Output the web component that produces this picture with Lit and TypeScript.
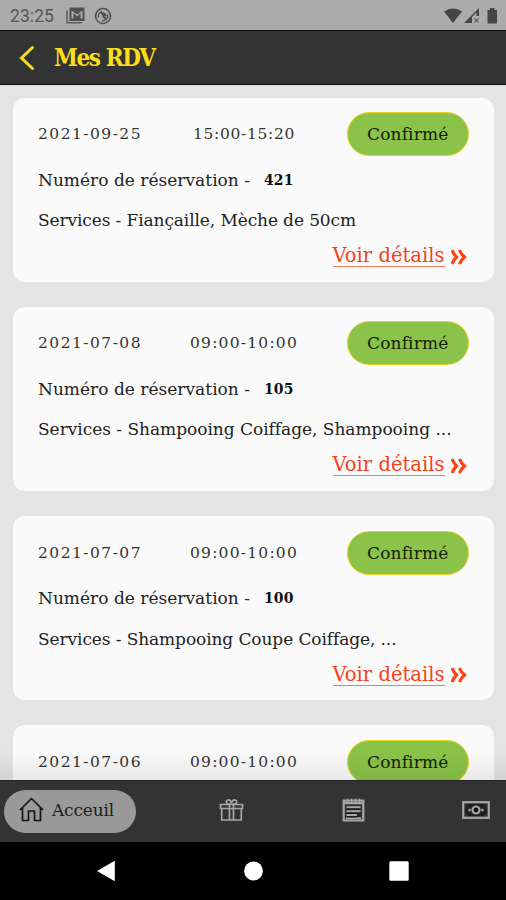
import { LitElement, html, css, nothing } from "lit";
import { customElement, property } from "lit/decorators.js";

const serif = css`"DejaVu Serif", serif`;
const condensed = css`"DejaVu Serif Condensed", "DejaVu Serif", serif`;

interface Booking {
  date: string;
  time: string;
  timeWidth: number;
  id?: string;
  services?: string;
  servicesWidth?: number;
}

const bookings: Booking[] = [
  { date: "2021-09-25", time: "15:00-15:20", timeWidth: 102, id: "421", services: "Services - Fiançaille, Mèche de 50cm", servicesWidth: 318 },
  { date: "2021-07-08", time: "09:00-10:00", timeWidth: 108, id: "105", services: "Services - Shampooing Coiffage, Shampooing ...", servicesWidth: 413 },
  { date: "2021-07-07", time: "09:00-10:00", timeWidth: 108, id: "100", services: "Services - Shampooing Coupe Coiffage, ...", servicesWidth: 358 },
  { date: "2021-07-06", time: "09:00-10:00", timeWidth: 108 },
];

/* One line of text whose tracking is adjusted to fill a given width. */
@customElement("fit-text")
export class FitText extends LitElement {
  @property() text = "";
  @property({ type: Number }) width = 100;

  static styles = css`
    :host { display: inline-block; white-space: pre; }
    span { display: inline-block; }
  `;

  updated() {
    const span = this.renderRoot.querySelector("span") as HTMLElement;
    span.style.letterSpacing = "0";
    const natural = span.getBoundingClientRect().width;
    const gap = (this.width - natural) / this.text.length;
    span.style.letterSpacing = `${gap.toFixed(3)}px`;
  }

  render() {
    return html`<span>${this.text}</span>`;
  }
}

@customElement("booking-card")
export class BookingCard extends LitElement {
  @property({ attribute: false }) booking!: Booking;

  static styles = css`
    :host {
      display: block;
      box-sizing: border-box;
      flex: none;
      height: 184.25px;
      padding: 14.5px 25px 0;
      border-radius: 12px;
      background: #fafafa;
      color: #222;
      font: 17px/24px ${serif};
    }
    .top { display: grid; grid-template-columns: 144px 124px 1fr; align-items: center; height: 44px; }
    .digits { display: block; font-size: 15.5px; color: #333; }
    .time { display: flex; justify-content: center; }
    .pill {
      justify-self: end;
      box-sizing: border-box;
      width: 122.5px;
      height: 44px;
      border: 1.5px solid #e6d21e;
      border-radius: 22px;
      background: #8bc34a;
      color: #14200a;
      display: flex;
      align-items: center;
      justify-content: center;
    }
    .number { display: flex; align-items: center; gap: 14px; height: 47px; }
    .number b { font-family: ${condensed}; font-size: 15.5px; color: #111; }
    .services { height: 34px; display: flex; align-items: center; }
    .details {
      display: flex;
      justify-content: flex-end;
      align-items: center;
      gap: 6px;
      height: 39px;
      padding-right: 2.5px;
      color: #f4431c;
      font-size: 19.5px;
    }
    .link { border-bottom: 1px solid #f77a60; line-height: 20px; }
    svg { display: block; }
  `;

  render() {
    const b = this.booking;
    return html`
      <div class="top">
        <fit-text class="digits" .text=${b.date} .width=${104}></fit-text>
        <div class="time"><fit-text class="digits" .text=${b.time} .width=${b.timeWidth}></fit-text></div>
        <div class="pill"><fit-text .text=${"Confirmé"} .width=${81}></fit-text></div>
      </div>
      ${b.services ? this.body(b) : nothing}
    `;
  }

  private body(b: Booking) {
    return html`
      <div class="number">
        <fit-text .text=${"Numéro de réservation -"} .width=${212}></fit-text>
        <b><fit-text .text=${b.id} .width=${29.5}></fit-text></b>
      </div>
      <div class="services"><fit-text .text=${b.services} .width=${b.servicesWidth}></fit-text></div>
      <div class="details">
        <fit-text class="link" .text=${"Voir détails"} .width=${112}></fit-text>
        <svg width="16" height="16" viewBox="0 0 16 16" fill="none" stroke="#fa4516" stroke-width="3.200">
          <path d="M1 1Q2.500 5 5.500 8Q2.500 11 1 15M8.500 1Q10 5 13.500 8Q10 11 8.500 15" />
        </svg>
      </div>
    `;
  }
}

@customElement("app-root")
export class AppRoot extends LitElement {
  static styles = css`
    :host {
      display: flex;
      flex-direction: column;
      width: 506px;
      height: 900px;
      overflow: hidden;
      background: #e4e4e4;
      font-family: ${serif};
    }
    svg { display: block; flex: none; }
    .status {
      box-sizing: border-box;
      flex: none;
      height: 30px;
      display: flex;
      align-items: center;
      padding: 1px 8px 0 10px;
      background: #ababab;
      color: #555;
      font: 17.5px/20px Roboto, sans-serif;
    }
    .notes { display: flex; gap: 9px; margin-left: 12px; }
    .signals { display: flex; margin-left: auto; }
    .header {
      box-sizing: border-box;
      flex: none;
      height: 55px;
      display: flex;
      align-items: center;
      gap: 19px;
      padding-left: 19px;
      border-top: 1.5px solid #0b0b0b;
      border-bottom: 1.5px solid #0b0b0b;
      background: #333;
      color: #fcdc1c;
      font-family: ${condensed};
      font-size: 24px;
      font-weight: bold;
      line-height: 30px;
    }
    .list {
      flex: 1;
      min-height: 0;
      overflow: hidden;
      display: flex;
      flex-direction: column;
      gap: 25px;
      padding: 12.5px 12px 0 13px;
      position: relative;
    }
    .list::after {
      content: "";
      position: absolute;
      inset: auto 0 0 0;
      height: 30px;
      background: linear-gradient(transparent, rgba(0, 0, 0, 0.07));
    }
    .tabs {
      box-sizing: border-box;
      flex: none;
      height: 62px;
      display: grid;
      grid-template-columns: 215px 122.5px 1fr auto;
      align-items: center;
      padding: 0 16px 3px 4px;
      border-top: 1px solid #222;
      background: #333;
    }
    .active {
      box-sizing: border-box;
      width: 132px;
      height: 43px;
      margin-top: 2px;
      padding: 0 0 2px 15px;
      border-radius: 22px;
      background: #999;
      color: #1c1c1c;
      font-size: 17px;
      display: flex;
      align-items: center;
      gap: 8px;
    }
    .system {
      box-sizing: border-box;
      flex: none;
      height: 58px;
      display: flex;
      align-items: center;
      justify-content: space-between;
      padding: 0 97px 0 96px;
      background: #000;
    }
  `;

  render() {
    return html`
      <div class="status">
        <fit-text .text=${"23:25"} .width=${44}></fit-text>
        <div class="notes">
          <svg width="19" height="17" viewBox="0 0 19 17">
            <path d="M1 3.500V15.800H16" fill="none" stroke="#5c5c5c" stroke-width="1.500" />
            <path d="M3.500 0.500H18.500V14H3.500ZM5.500 3.500V11.500H16.500V3.500L11 7.500Z" fill="#505050" fill-rule="evenodd" />
            <path d="M7.500 12V6L11 9.500L14.500 6V12Z" fill="#505050" />
          </svg>
          <svg width="18" height="18" viewBox="0 0 18 18" fill="none" stroke="#505050">
            <circle cx="9" cy="9" r="7.500" stroke-width="1.600" />
            <path d="M4.500 10.500A4.800 4.800 0 0 1 8 4.500M13.600 7.500A4.800 4.800 0 0 1 8 13.500" stroke-width="1.300" />
            <path d="M7 5.500Q11.500 4.500 13 9.500L10 9L7 7.500Z" fill="#505050" stroke="none" />
            <path d="M8.500 8.500L12 12" stroke-width="1.800" />
          </svg>
        </div>
        <div class="signals">
          <svg width="54" height="18" viewBox="0 0 54 18" fill="#454545">
            <path d="M0 4.500Q9 -1.500 18 4.500L9 16Z" />
            <path d="M20 16L35 1V9H32.500V5.500L28 10V16Z" />
            <path d="M30.500 11.500L34.500 15.500M34.500 11.500L30.500 15.500" stroke="#666" stroke-width="1.300" />
            <path d="M43.500 3H46V1H50.500V3H53V16.500H43.500Z" />
          </svg>
        </div>
      </div>
      <div class="header">
        <svg width="16" height="26" viewBox="0 0 16 26" fill="none" stroke="#fcdc1c" stroke-width="3" stroke-linecap="round">
          <path d="M13.500 2.500L2.500 13L13.500 23.500" />
        </svg>
        <fit-text .text=${"Mes RDV"} .width=${100.5}></fit-text>
      </div>
      <div class="list">
        ${bookings.map((b) => html`<booking-card .booking=${b}></booking-card>`)}
      </div>
      <div class="tabs">
        <div class="active">
          <svg width="25" height="26" viewBox="0 0 25 26" fill="none" stroke="#151515" stroke-width="1.700" stroke-linejoin="round">
            <path d="M1 13L12.500 1.500L24 13M3.500 11V23.500H9.500V14H15.500V23.500H21.500V11" />
          </svg>
          <fit-text .text=${"Acceuil"} .width=${62}></fit-text>
        </div>
        <svg width="25" height="24" viewBox="0 0 25 24" fill="none" stroke="#a6a6a6" stroke-width="1.700">
          <path d="M1.500 6.500H23.500V10.500H1.500ZM2.700 10.500V22H22.300V10.500M10.500 6.500V22M14.500 6.500V22" />
          <path d="M12 6.500Q6 6 7.500 3Q10 0 12.500 4.500Q15 0 17.500 3Q19 6 13 6.500" />
        </svg>
        <svg width="24" height="24" viewBox="0 0 24 24" fill="none" stroke="#a6a6a6">
          <path d="M1.700 2.500H21.300V22.500H1.700Z" stroke-width="2.200" />
          <path d="M2 5H21" stroke-width="2.500" />
          <path d="M5.500 0.500V4M9.500 0.500V4M13.500 0.500V4M17.500 0.500V4" stroke-width="1.300" />
          <path d="M4.500 9.300H18.500M4.500 13.200H18.500M4.500 17H15M4 20.300H19" stroke-width="1.900" />
          <path d="M4.500 11.300H18.500M4.500 15.200H18.500M4.500 18.700H15M15.500 18H18.500" stroke="#1c1c1c" stroke-width="1.500" />
        </svg>
        <svg width="28" height="18" viewBox="0 0 28 18" fill="none" stroke="#a6a6a6">
          <rect x="1.200" y="1.200" width="25.600" height="15.600" stroke-width="2.200" />
          <path d="M6 3.800H22Q22 5.500 24 5.500V12.500Q22 12.500 22 14.200H6Q6 12.500 4 12.500V5.500Q6 5.500 6 3.800Z" fill="#222" stroke="#111" stroke-width="0.800" />
          <circle cx="14" cy="9" r="3.500" fill="#111" stroke-width="2.200" />
          <path d="M6.500 9H8.700M19.300 9H21.500" stroke-width="2.500" />
        </svg>
      </div>
      <div class="system">
        <svg width="20" height="22" viewBox="0 0 20 22"><path d="M1 11L18.800 0.700V21.300Z" fill="#fff" /></svg>
        <svg width="21" height="20" viewBox="0 0 21 20"><circle cx="11.500" cy="10" r="9.400" fill="#fff" /></svg>
        <svg width="20" height="20" viewBox="0 0 20 20"><rect x="0.300" y="0.300" width="19.400" height="19.400" rx="1.500" fill="#fff" /></svg>
      </div>
    `;
  }
}
